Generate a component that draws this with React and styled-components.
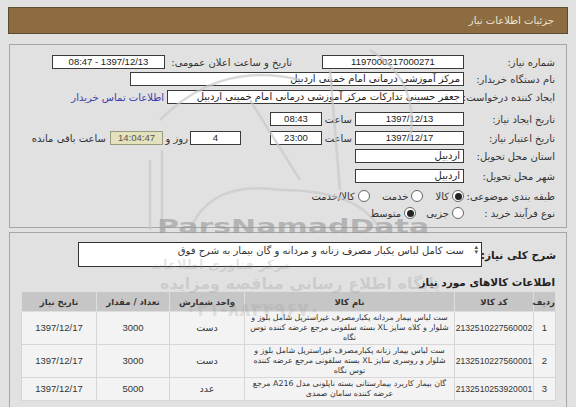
import React from 'react';
import styled, { createGlobalStyle } from 'styled-components';

const Global = createGlobalStyle`
  html, body { margin: 0; padding: 0; background: #e1e1e1; }
  body { font-family: Tahoma, "DejaVu Sans", sans-serif; font-size: 10px; color: #333; }
  * { box-sizing: border-box; }
`;

const NUM = '"Liberation Sans", Arial, sans-serif';

const Page = styled.div`
  position: relative;
  direction: rtl;
  width: 576px;
  height: 407px;
  overflow: hidden;
  padding: 7px 8px 0 8px;
`;

const Header = styled.div`
  height: 27px;
  background: #8c6c40;
  border: 1px solid #5c4b35;
  color: #efe6d6;
  font-size: 10px;
  display: flex;
  align-items: center;
  padding-right: 13px;
`;

const Panel = styled.div`
  margin: ${p => p.$mt}px 1px 0 1px;
  border: 1px solid #a6a6a6;
  height: ${p => p.$h}px;
  padding: ${p => p.$pt}px ${p => p.$pr}px 0 0;
`;

const Row = styled.div`
  display: flex;
  align-items: center;
  height: 16px;
  margin-top: ${p => p.$mt || 0}px;
  white-space: nowrap;
`;

const Label = styled.div`
  flex: none;
  width: ${p => p.$w || 91}px;
  text-align: right;
  padding-right: ${p => p.$pr || 0}px;
  color: #333;
  white-space: nowrap;
`;

const Field = styled.div`
  flex: none;
  width: ${p => p.$w}px;
  height: 14px;
  margin-right: ${p => p.$mr || 0}px;
  background: ${p => (p.$yellow ? '#e4e2bd' : '#fff')};
  border: 1px solid ${p => (p.$yellow ? '#9a9a80' : '#3a3a3a')};
  color: ${p => (p.$yellow ? '#555' : '#222')};
  font-family: ${p => (p.$num ? NUM : 'inherit')};
  font-size: ${p => (p.$num ? 9.5 : 10)}px;
  line-height: 12px;
  text-align: ${p => p.$align || 'center'};
  padding: 0 3px;
  overflow: hidden;
  white-space: nowrap;
`;

const Link = styled.span`
  margin-right: 3px;
  color: #3c3caa;
`;

const Text = styled.span`
  margin-right: ${p => p.$mr || 0}px;
`;

const Radios = styled.div`
  display: flex;
  align-items: center;
  gap: ${p => p.$gap || 12}px;
`;

const RadioItem = styled.label`
  display: flex;
  align-items: center;
  gap: 3px;
`;

const Circle = styled.span`
  width: 12px;
  height: 12px;
  border-radius: 50%;
  border: 1px solid #666;
  background: #fff;
  display: flex;
  align-items: center;
  justify-content: center;
  &::after {
    content: '';
    width: 7px;
    height: 7px;
    border-radius: 50%;
    background: ${p => (p.$on ? '#222' : 'transparent')};
  }
`;

const DescRow = styled.div`
  display: flex;
  align-items: center;
  margin-top: 9px;
`;

const DescLabel = styled.div`
  flex: none;
  width: 74px;
  font-weight: bold;
  font-size: 10.5px;
  color: #222;
  text-align: right;
  white-space: nowrap;
`;

const TextArea = styled.div`
  position: relative;
  width: 404px;
  height: 25px;
  border: 1px solid #333;
  background: #fff;
  padding: 2px 17px 0 0;
  font-size: 10px;
  color: #333;
  white-space: nowrap;
`;

const Spin = styled.span`
  position: absolute;
  right: 3px;
  top: 2px;
  font-size: 7px;
  line-height: 5px;
  color: #555;
  display: flex;
  flex-direction: column;
`;

const SectionTitle = styled.div`
  margin-top: 9px;
  height: 14px;
  font-weight: bold;
  font-size: 10.5px;
  color: #222;
  padding-right: 1px;
  white-space: nowrap;
`;

const Table = styled.table`
  margin: 1px 0 0 0;
  width: 534px;
  border-collapse: collapse;
  border: 1px solid #d4d4d4;
  background: #f3f3f3;
  table-layout: fixed;
`;

const Th = styled.th`
  width: ${p => p.$w}px;
  height: 20px;
  background: #c6c6c6;
  border: 1px solid #dedede;
  font-size: 8.5px;
  font-weight: bold;
  color: #333;
  padding: 0;
  white-space: nowrap;
`;

const sizes = { num: 9.5, code: 8.6, name: 7.9, text: 9.5 };

const Td = styled.td`
  border: 1px solid #d6d6d6;
  text-align: center;
  font-size: ${p => sizes[p.$kind || 'text']}px;
  line-height: 10px;
  color: #333;
  padding: 1px 0;
  white-space: nowrap;
  overflow: hidden;
  font-family: ${p => (p.$kind === 'num' || p.$kind === 'code' ? NUM : 'inherit')};
`;

const BottomBox = styled.div`
  margin: 10px 86px 0 0;
  width: 382px;
  height: 20px;
  border: 1px solid #333;
  background: #fff;
`;

const Watermark = styled.div`
  position: absolute;
  left: ${p => p.$x}px;
  top: ${p => p.$y}px;
  font-size: ${p => p.$size}px;
  line-height: 1;
  font-weight: bold;
  color: rgba(150, 150, 150, ${p => p.$op || 0.5});
  font-family: "DejaVu Sans", sans-serif;
  white-space: nowrap;
  pointer-events: none;
  direction: ltr;
  transform: scaleX(${p => p.$sx || 1});
  transform-origin: left top;
`;

const Logo = styled.svg`
  position: absolute;
  left: 130px;
  top: 40px;
  pointer-events: none;
`;

const rows = [
  {
    id: '1',
    code: '2132510227560002',
    name: ['ست لباس بیمار مردانه یکبارمصرف غیراستریل شامل بلوز و', 'شلوار و کلاه سایز XL بسته سلفونی مرجع عرضه کننده توس', 'نگاه'],
    unit: 'دست',
    qty: '3000',
    date: '1397/12/17',
  },
  {
    id: '2',
    code: '2132510227560001',
    name: ['ست لباس بیمار زنانه یکبارمصرف غیراستریل شامل بلوز و', 'شلوار و روسری سایز XL بسته سلفونی مرجع عرضه کننده', 'توس نگاه'],
    unit: 'دست',
    qty: '3000',
    date: '1397/12/17',
  },
  {
    id: '3',
    code: '2132510253920001',
    name: ['گان بیمار کاربرد بیمارستانی بسته نایلونی مدل A216 مرجع', 'عرضه کننده سامان صمدی'],
    unit: 'عدد',
    qty: '5000',
    date: '1397/12/17',
  },
];

export default function App() {
  return (
    <>
      <Global />
      <Page>
        <Header>جزئیات اطلاعات نیاز</Header>

        <Panel $mt={10} $h={184} $pt={9} $pr={11}>
          <Row>
            <Label>شماره نیاز:</Label>
            <Field $w={142} $num>1197000217000271</Field>
            <Label $w={157} $pr={30}>تاریخ و ساعت اعلان عمومی:</Label>
            <Field $w={113} $num>1397/12/13 - 08:47</Field>
          </Row>
          <Row $mt={1}>
            <Label>نام دستگاه خریدار:</Label>
            <Field $w={334} $align="right">مرکز آموزشی درمانی امام خمینی اردبیل</Field>
          </Row>
          <Row $mt={2}>
            <Label>ایجاد کننده درخواست:</Label>
            <Field $w={297} $align="right">جعفر حسینی تدارکات  مرکز آموزشی درمانی امام خمینی اردبیل</Field>
            <Link>اطلاعات تماس خریدار</Link>
          </Row>
          <Row $mt={6}>
            <Label>تاریخ ایجاد نیاز:</Label>
            <Field $w={109} $num>1397/12/13</Field>
            <Label $w={33} $pr={3}>ساعت</Label>
            <Field $w={52} $num>08:43</Field>
          </Row>
          <Row $mt={3}>
            <Label>تاریخ اعتبار نیاز:</Label>
            <Field $w={109} $num>1397/12/17</Field>
            <Label $w={33} $pr={3}>ساعت</Label>
            <Field $w={52} $num>23:00</Field>
            <Field $w={51} $mr={29} $num>4</Field>
            <Label $w={27} $pr={2}>روز و</Label>
            <Field $w={53} $yellow $num>14:04:47</Field>
            <Text $mr={4}>ساعت باقی مانده</Text>
          </Row>
          <Row $mt={2}>
            <Label>استان محل تحویل:</Label>
            <Field $w={109} $align="right">اردبیل</Field>
          </Row>
          <Row $mt={4}>
            <Label>شهر محل تحویل:</Label>
            <Field $w={109} $align="right">اردبیل</Field>
          </Row>
          <Row $mt={4}>
            <Label>طبقه بندی موضوعی:</Label>
            <Radios>
              <RadioItem><Circle $on />کالا</RadioItem>
              <RadioItem><Circle />خدمت</RadioItem>
              <RadioItem><Circle />کالا/خدمت</RadioItem>
            </Radios>
          </Row>
          <Row $mt={1}>
            <Label>نوع فرآیند خرید :</Label>
            <Radios $gap={10}>
              <RadioItem><Circle />جزیی</RadioItem>
              <RadioItem><Circle $on />متوسط</RadioItem>
            </Radios>
          </Row>
        </Panel>

        <Panel $mt={4} $h={200} $pt={0} $pr={10}>
          <DescRow>
            <DescLabel>شرح کلی نیاز:</DescLabel>
            <TextArea>
              <Spin><span>▴</span><span>▾</span></Spin>
              ست کامل لباس یکبار مصرف زنانه و مردانه و گان بیمار به شرح فوق
            </TextArea>
          </DescRow>
          <SectionTitle>اطلاعات کالاهای مورد نیاز</SectionTitle>
          <Table>
            <thead>
              <tr>
                <Th $w={22}>ردیف</Th>
                <Th $w={79}>کد کالا</Th>
                <Th $w={210}>نام کالا</Th>
                <Th $w={75}>واحد شمارش</Th>
                <Th $w={73}>تعداد / مقدار</Th>
                <Th $w={75}>تاریخ نیاز</Th>
              </tr>
            </thead>
            <tbody>
              {rows.map(r => (
                <tr key={r.id}>
                  <Td $kind="num">{r.id}</Td>
                  <Td $kind="code">{r.code}</Td>
                  <Td $kind="name">
                    {r.name.map((l, i) => (
                      <React.Fragment key={i}>
                        {l}
                        {i < r.name.length - 1 && <br />}
                      </React.Fragment>
                    ))}
                  </Td>
                  <Td>{r.unit}</Td>
                  <Td $kind="num">{r.qty}</Td>
                  <Td $kind="num">{r.date}</Td>
                </tr>
              ))}
            </tbody>
          </Table>
          <BottomBox />
        </Panel>

        <Logo width="300" height="190" viewBox="0 0 300 190">
          <g fill="none" stroke="#c9c9c9" strokeWidth="2.5" opacity="0.7">
            <path d="M20 120 L20 190" />
            <path d="M32 110 L32 190" />
            <path d="M30 80 Q90 20 170 40" />
            <path d="M60 190 Q80 140 150 150" />
            <path d="M150 150 Q230 150 250 190" />
            <path d="M120 60 L170 140" />
            <path d="M200 30 L210 150" />
            <path d="M240 10 Q290 40 280 100" />
          </g>
        </Logo>
        <Watermark $x={157} $y={216} $size={20} $sx={1.5} $op={0.6}>ParsNamadData</Watermark>
        <Watermark $x={150} $y={258} $size={13} $op={0.25}>مرکز فناوری اطلاعات</Watermark>
        <Watermark $x={160} $y={276} $size={16} $op={0.28}>پایگاه اطلاع رسانی مناقصه ومزایده</Watermark>
        <Watermark $x={185} $y={300} $size={19} $op={0.22}>۰۲۱-۸۸۳۴۹۶۷۰</Watermark>
      </Page>
    </>
  );
}
